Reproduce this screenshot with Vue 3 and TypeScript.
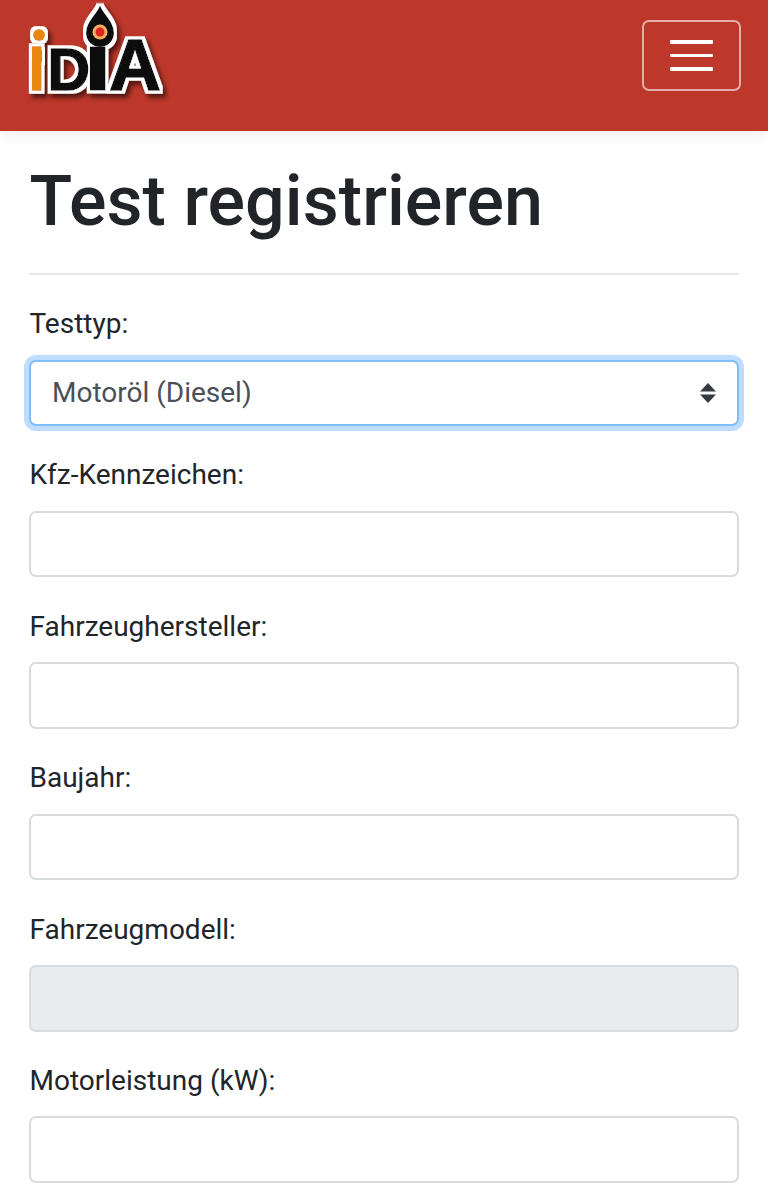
<script setup lang="ts">
interface Field { label: string; disabled?: boolean }
const fields: Field[] = [
  { label: 'Kfz-Kennzeichen:' },
  { label: 'Fahrzeughersteller:' },
  { label: 'Baujahr:' },
  { label: 'Fahrzeugmodell:', disabled: true },
  { label: 'Motorleistung (kW):' },
]
</script>

<template>
  <div class="page">
    <header class="navbar">
      <svg class="logo" width="150" height="110" viewBox="0 0 150 110" role="img" aria-label="iDiA">
        <defs>
          <filter id="sh" x="-15%" y="-15%" width="140%" height="140%">
            <feMorphology in="SourceAlpha" operator="dilate" radius="2.5" result="d" />
            <feFlood flood-color="#fff" />
            <feComposite in2="d" operator="in" result="w" />
            <feGaussianBlur in="d" stdDeviation="2.5" />
            <feOffset dx="3" dy="4" />
            <feComponentTransfer result="s"><feFuncA type="linear" slope="0.6" /></feComponentTransfer>
            <feGaussianBlur in="SourceGraphic" stdDeviation="0.4" result="g" />
            <feMerge>
              <feMergeNode in="s" />
              <feMergeNode in="w" />
              <feMergeNode in="g" />
            </feMerge>
          </filter>
        </defs>
        <g filter="url(#sh)">
          <path d="M73 5 C75 13 87 21 87 33 A14 14 0 0 1 59 33 C59 21 71 13 73 5 Z" fill="#111" />
          <circle cx="73" cy="32" r="7.5" fill="#f0b060" />
          <circle cx="73" cy="32" r="4.5" fill="#e2231a" />
          <circle cx="12" cy="35" r="6" fill="#e8860c" />
          <rect x="5" y="50" width="10" height="12" fill="#e8860c" />
          <text class="lt">
            <tspan class="t-i1" x="1.6" y="90">i</tspan>
            <tspan class="t-d" x="20.6" y="90">D</tspan>
            <tspan class="t-i2" x="64.1" y="86.25">i</tspan>
            <tspan class="t-a" x="82" y="90">A</tspan>
          </text>
        </g>
      </svg>
      <button class="toggler" type="button" aria-label="Navigation">
        <span></span><span></span><span></span>
      </button>
    </header>

    <main class="content">
      <h1>Test registrieren</h1>
      <hr />
      <div class="group">
        <label>Testtyp:</label>
        <div class="select focus">
          <span>Motoröl (Diesel)</span>
          <svg width="16" height="20" viewBox="0 0 16 20">
            <path d="M8 0 L16 8.4 H0 Z M8 20 L0 11.6 H16 Z" fill="#343a40" />
          </svg>
        </div>
      </div>
      <div v-for="f in fields" :key="f.label" class="group">
        <label>{{ f.label }}</label>
        <div class="input" :class="{ disabled: f.disabled }"></div>
      </div>
    </main>
  </div>
</template>

<style>
html, body { margin: 0; background: #fff; }
</style>

<style scoped>
.page {
  width: 768px;
  height: 1191px;
  overflow: hidden;
  font-family: Roboto, "Liberation Sans", sans-serif;
  color: #212529;
  background: #fff;
}
.navbar {
  height: 131px;
  box-sizing: border-box;
  background: #bd372a;
  box-shadow: 0 3px 14px rgba(0, 0, 0, 0.08);
  display: flex;
  align-items: flex-start;
  justify-content: space-between;
  padding: 0 27px;
}
.logo { display: block; }
.lt {
  font-family: "Liberation Sans", sans-serif;
  font-weight: 700;
  font-size: 59px;
  stroke-linejoin: miter;
}
.t-i1 { fill: #e8860c; stroke: #e8860c; stroke-width: 1.5px; }
.t-d { fill: #0a0a0a; stroke: #0a0a0a; stroke-width: 1.5px; }
.t-i2 { font-size: 48px; fill: #0a0a0a; stroke: #0a0a0a; stroke-width: 9px; }
.t-a { font-size: 72px; fill: #0a0a0a; stroke: #0a0a0a; stroke-width: 1.5px; }
.toggler {
  margin-top: 20px;
  width: 99px;
  height: 71px;
  box-sizing: border-box;
  background: transparent;
  border: 2px solid rgba(255, 255, 255, 0.6);
  border-radius: 7px;
  padding: 0;
  display: flex;
  flex-direction: column;
  align-items: center;
  justify-content: center;
  gap: 10px;
}
.toggler span {
  display: block;
  width: 43px;
  height: 3.5px;
  border-radius: 1px;
  background: #fff;
}
.content { padding: 0 29px; }
h1 {
  margin: 28px 0 0;
  font-size: 70px;
  line-height: 84px;
  font-weight: 500;
  letter-spacing: 0.05px;
  padding-left: 0.5px;
}
hr {
  margin: 30px 0 28px;
  border: 0;
  border-top: 2px solid rgba(0, 0, 0, 0.1);
}
.group { margin-bottom: 28.4px; }
label {
  display: block;
  font-size: 28px;
  line-height: 42px;
  margin-bottom: 14.5px;
  padding-left: 0.5px;
}
.input, .select {
  height: 66.5px;
  box-sizing: border-box;
  border: 2px solid #d8dce0;
  border-radius: 7px;
  background: #fff;
}
.input.disabled { background: #e9ecef; }
.select {
  display: flex;
  align-items: center;
  justify-content: space-between;
  padding: 0 21px;
  font-size: 28px;
  color: #495057;
}
.select.focus {
  border-color: #80bdff;
  box-shadow: 0 0 0 5px rgba(0, 123, 255, 0.25);
}
</style>
